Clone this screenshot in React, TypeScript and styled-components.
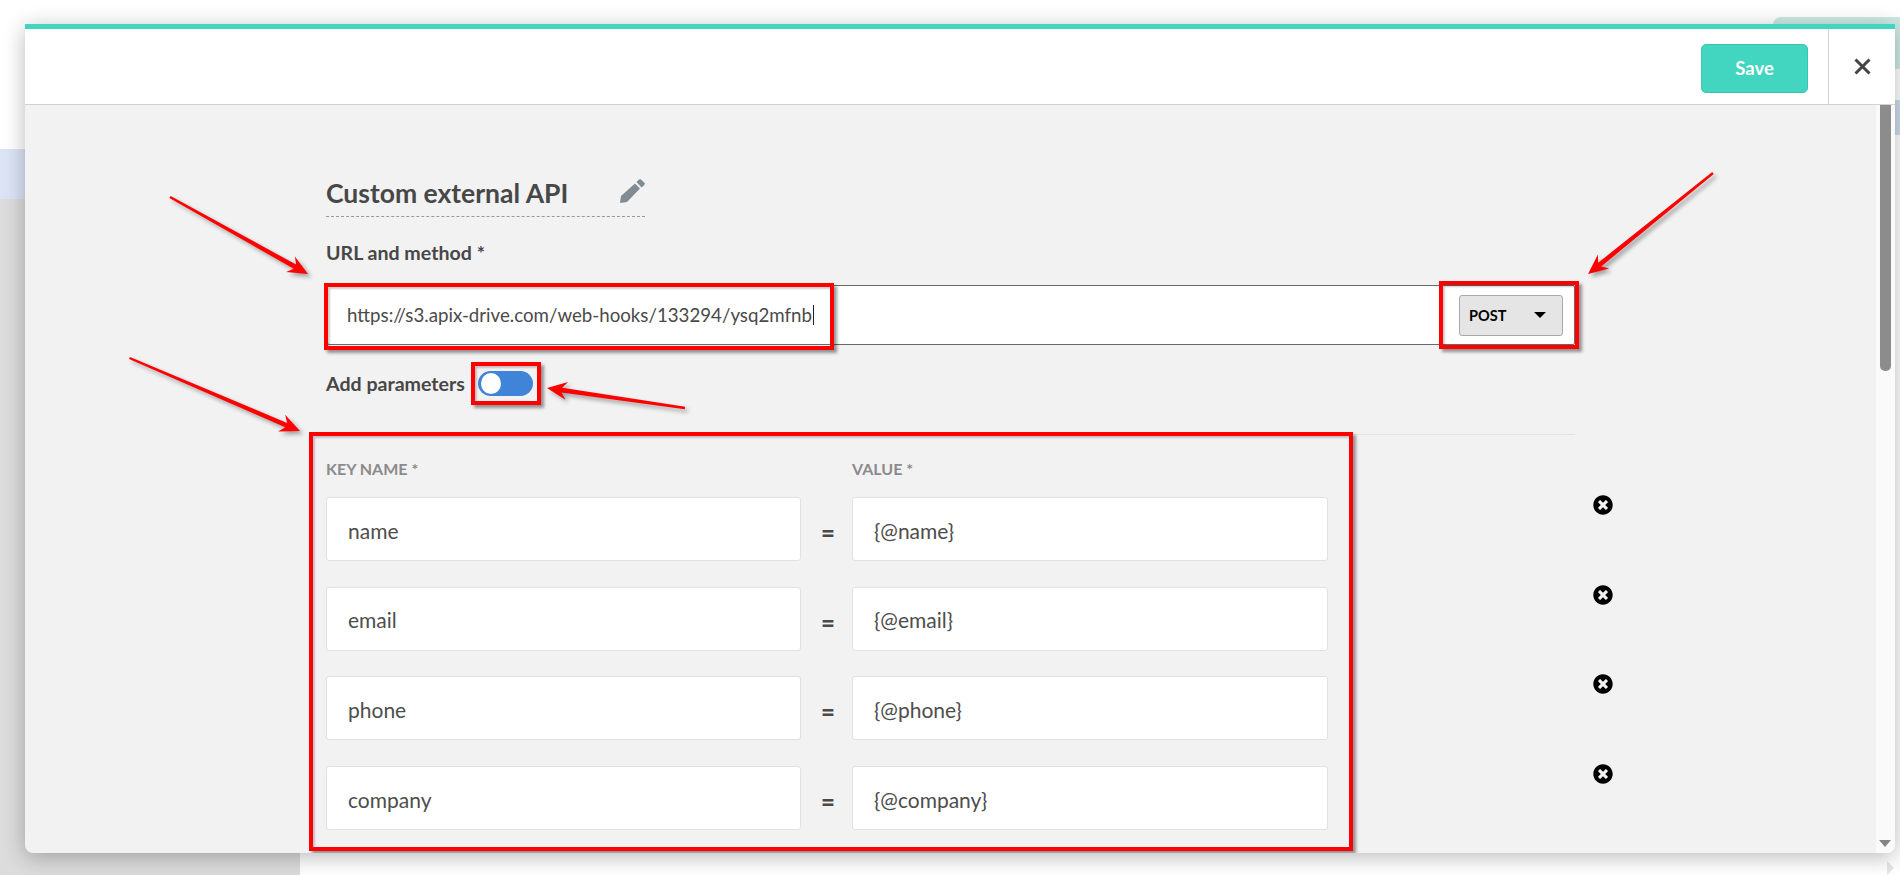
import React from "react";
import styled, { createGlobalStyle } from "styled-components";
import { FaTimesCircle } from "react-icons/fa";

const Global = createGlobalStyle`
  html, body { margin: 0; padding: 0; width: 1900px; height: 875px; overflow: hidden; background: #fff; }
  #root { width: 1900px; height: 875px; }
  * { box-sizing: border-box; }
  body { font-family: Lato, "Open Sans", sans-serif; color: #444; }
`;

const Page = styled.div`
  position: relative;
  width: 1900px;
  height: 875px;
  display: grid;
  grid-template-columns: 300px 1fr;
  overflow: hidden;
`;
const Sidebar = styled.aside`
  display: flex;
  flex-direction: column;
  background: #dcdcdc;
`;
const SidebarTop = styled.div`
  height: 149px;
  background: #fff;
`;
const SidebarActive = styled.div`
  height: 50px;
  background: #dce4f6;
`;
const Main = styled.main`
  display: flex;
  flex-direction: column;
  align-items: flex-end;
  background: #fff;
`;
const GhostButton = styled.div`
  width: 127px;
  height: 52px;
  margin-top: 17px;
  background: #cde9e4;
  border-radius: 8px 0 0 0;
`;
const GhostStrip = styled.div`
  width: 127px;
  height: 35px;
  margin-top: 31px;
  background: #cfdbec;
`;
const GhostArrow = styled.div`
  margin-top: auto;
  margin-right: 6px;
  width: 0;
  height: 0;
  border-left: 7px solid #e6e6e6;
  border-top: 7px solid transparent;
  border-bottom: 7px solid transparent;
`;

const Modal = styled.section`
  position: absolute;
  left: 25px;
  top: 24px;
  width: 1870px;
  height: 829px;
  display: flex;
  flex-direction: column;
  background: #f2f2f2;
  border-top: 5px solid #42d6c0;
  border-radius: 0 0 8px 8px;
  box-shadow: 0 4px 22px rgba(0, 0, 0, 0.28);
  overflow: hidden;
`;
const Header = styled.header`
  flex: none;
  height: 76px;
  display: flex;
  justify-content: flex-end;
  background: #fff;
  border-bottom: 1px solid #d2d2d2;
`;
const HeaderAction = styled.div`
  display: flex;
  align-items: center;
  padding: 0 20px 0 0;
`;
const SaveButton = styled.button`
  width: 107px;
  height: 49px;
  margin-top: 3px;
  padding: 0;
  background: #42d6c0;
  border: 1px solid #3cc4b0;
  border-radius: 5px;
  color: #fff;
  font: 700 18.5px Lato, sans-serif;
`;
const CloseCell = styled.div`
  width: 67px;
  display: flex;
  align-items: center;
  justify-content: center;
  border-left: 1px solid #d2d2d2;
`;
const Body = styled.div`
  flex: 1;
  min-height: 0;
  display: flex;
`;
const Scroll = styled.div`
  flex: 1;
  min-width: 0;
  padding: 70px 0 0 301px;
  overflow: hidden;
`;
const Track = styled.div`
  position: relative;
  flex: none;
  width: 19px;
  background: #fafafa;
  padding-left: 4px;
`;
const Thumb = styled.div`
  width: 11px;
  height: 266px;
  background: #8c8c8c;
  border-radius: 0 0 5px 5px;
`;
const TrackArrow = styled.div`
  position: absolute;
  left: 3px;
  bottom: 6px;
  width: 0;
  height: 0;
  border-top: 7px solid #858585;
  border-left: 6.5px solid transparent;
  border-right: 6.5px solid transparent;
`;

const Form = styled.div`
  width: 1249px;
`;
const TitleRow = styled.div`
  width: 319px;
  height: 42px;
  display: flex;
  justify-content: space-between;
  align-items: flex-start;
  border-bottom: 1px dashed #9a9a9a;
`;
const Title = styled.h1`
  margin: 0;
  font: 700 26.5px/37px Lato, sans-serif;
  color: #474747;
`;
const Pencil = styled.svg`
  flex: none;
  margin-top: 4px;
  width: 25px;
  height: 24px;
  fill: #808b93;
`;
const Label = styled.div`
  margin-top: 25px;
  font: 700 19.6px/22px Lato, sans-serif;
  color: #474747;
`;
const UrlBox = styled.div`
  position: relative;
  height: 60px;
  margin-top: 21px;
  margin-left: 1px;
  display: flex;
  align-items: center;
  justify-content: space-between;
  padding: 0 11px 0 19px;
  background: #fff;
  border: 1px solid #6a6a6a;
  border-radius: 2px;
`;
const UrlText = styled.div`
  display: flex;
  align-items: center;
  font: 400 18.7px/24px Lato, sans-serif;
  color: #4a4a4a;
`;
const Caret = styled.span`
  width: 1px;
  height: 20px;
  margin-left: 1px;
  background: #222;
`;
const MethodSelect = styled.div`
  width: 104px;
  height: 41px;
  display: flex;
  align-items: center;
  justify-content: space-between;
  padding: 0 16px 0 9px;
  background: #e5e5e5;
  border: 1px solid #a9a9a9;
  border-radius: 3px;
  color: #000;
  font: 700 14.5px Lato, sans-serif;
`;
const DownCaret = styled.span`
  width: 0;
  height: 0;
  border-top: 6px solid #000;
  border-left: 6.5px solid transparent;
  border-right: 6.5px solid transparent;
`;
const ToggleRow = styled.div`
  display: flex;
  align-items: center;
  gap: 13px;
  height: 25px;
  margin-top: 26px;
`;
const ToggleLabel = styled.span`
  font: 700 19.6px/22px Lato, sans-serif;
  color: #474747;
`;
const Toggle = styled.div`
  position: relative;
  width: 55px;
  height: 25px;
  padding: 2px 3px;
  background: #3f84d8;
  border-radius: 13px;
`;
const Knob = styled.div`
  width: 20px;
  height: 21px;
  background: #fff;
  border-radius: 50%;
`;
const Divider = styled.hr`
  height: 1px;
  margin: 38px 0 0;
  border: 0;
  background: #e2e2e2;
`;
const Params = styled.div`
  position: relative;
  padding-top: 24px;
`;
const ColumnHead = styled.div`
  display: flex;
  height: 20px;
  font: 700 16px/20px Lato, sans-serif;
  color: #8b8b8b;
`;
const KeyHead = styled.span`
  width: 526px;
`;
const Rows = styled.div`
  display: flex;
  flex-direction: column;
  gap: 25.7px;
  margin-top: 18px;
`;
const Row = styled.div`
  display: flex;
  height: 64px;
`;
const Field = styled.div<{ $w: number }>`
  flex: none;
  width: ${(p) => p.$w}px;
  height: 100%;
  display: flex;
  align-items: center;
  padding: 3px 0 0 21px;
  background: #fff;
  border: 1px solid #e1e1e1;
  border-radius: 3px;
  font: 400 21px/24px Lato, sans-serif;
  color: #4d4d4d;
`;
const Equals = styled.span`
  flex: none;
  width: 51px;
  display: flex;
  align-items: center;
  justify-content: center;
  padding: 8px 0 0 3px;
  font: 900 24px/24px Lato, sans-serif;
  color: #4a4a4a;
`;
const Remove = styled.span`
  flex: none;
  display: flex;
  margin: -2px 0 0 264.5px;
  height: 20px;
  color: #000;
`;
const Highlight = styled.div<{ $t: number; $r?: number; $b: number; $l?: number; $w?: number }>`
  position: absolute;
  top: ${(p) => p.$t}px;
  bottom: ${(p) => p.$b}px;
  ${(p) => (p.$l !== undefined ? `left: ${p.$l}px;` : "")}
  ${(p) => (p.$r !== undefined ? `right: ${p.$r}px;` : "")}
  ${(p) => (p.$w !== undefined ? `width: ${p.$w}px;` : "")}
  border: 4px solid #fe0000;
  box-shadow: 3px 3px 3px rgba(0, 0, 0, 0.4), inset 2px 2px 2px rgba(0, 0, 0, 0.2);
  pointer-events: none;
`;
const Annotations = styled.svg`
  position: absolute;
  left: 0;
  top: 0;
  width: 1900px;
  height: 875px;
  pointer-events: none;
  overflow: visible;
  filter: drop-shadow(3px 3px 2px rgba(0, 0, 0, 0.35));
`;

const arrowPoints = (x1: number, y1: number, x2: number, y2: number) => {
  const len = Math.hypot(x2 - x1, y2 - y1);
  const ux = (x2 - x1) / len;
  const uy = (y2 - y1) / len;
  const nx = -uy;
  const ny = ux;
  const at = (d: number, w: number) => `${x1 + ux * d + nx * w},${y1 + uy * d + ny * w}`;
  return [
    at(0, 1.2),
    at(len - 15, 2.4),
    at(len - 20, 9),
    at(len, 0),
    at(len - 20, -9),
    at(len - 15, -2.4),
    at(0, -1.2),
  ].join(" ");
};

const arrows = [
  [170, 197, 308, 274],
  [1713, 173, 1588, 274],
  [129.5, 358, 300, 431],
  [685, 408, 547, 388],
];
const params = ["name", "email", "phone", "company"];

export default function App() {
  return (
    <Page>
      <Global />
      <Sidebar>
        <SidebarTop />
        <SidebarActive />
      </Sidebar>
      <Main>
        <GhostButton />
        <GhostStrip />
        <GhostArrow />
      </Main>
      <Modal>
        <Header>
          <HeaderAction>
            <SaveButton>Save</SaveButton>
          </HeaderAction>
          <CloseCell>
            <svg width="17" height="17" viewBox="0 0 17 17">
              <path d="M1.5 1.5 L15.5 15.5 M15.5 1.5 L1.5 15.5" stroke="#444" strokeWidth="3" fill="none" />
            </svg>
          </CloseCell>
        </Header>
        <Body>
          <Scroll>
            <Form>
              <TitleRow>
                <Title>Custom external API</Title>
                <Pencil viewBox="0 0 25 24">
                  <path d="M0 24 L1 17 L15 4.5 L20 9.5 L7 23 Z" />
                  <path d="M16.5 3 L19 0.6 Q20 0 21 0.6 L24.6 4 Q25 5 24.4 6 L21.5 8.5 Z" />
                </Pencil>
              </TitleRow>
              <Label>URL and method *</Label>
              <UrlBox>
                <UrlText>
                  https://s3.apix-drive.com/web-hooks/133294/ysq2mfnb
                  <Caret />
                </UrlText>
                <MethodSelect>
                  POST
                  <DownCaret />
                </MethodSelect>
                <Highlight $t={-3} $b={-6} $l={-4} $w={510} />
                <Highlight $t={-5} $b={-5} $r={-5} $w={140} />
              </UrlBox>
              <ToggleRow>
                <ToggleLabel>Add parameters</ToggleLabel>
                <Toggle>
                  <Knob />
                  <Highlight $t={-9} $b={-9} $l={-7} $r={-8} />
                </Toggle>
              </ToggleRow>
              <Divider />
              <Params>
                <ColumnHead>
                  <KeyHead>KEY NAME *</KeyHead>
                  <span>VALUE *</span>
                </ColumnHead>
                <Rows>
                  {params.map((p) => (
                    <Row key={p}>
                      <Field $w={475}>{p}</Field>
                      <Equals>=</Equals>
                      <Field $w={476}>{`{@${p}}`}</Field>
                      <Remove>
                        <FaTimesCircle size={20} />
                      </Remove>
                    </Row>
                  ))}
                </Rows>
                <Highlight $t={-3} $b={-21} $l={-17} $r={222} />
              </Params>
            </Form>
          </Scroll>
          <Track>
            <Thumb />
            <TrackArrow />
          </Track>
        </Body>
      </Modal>
      <Annotations viewBox="0 0 1900 875">
        {arrows.map(([a, b, c, d]) => (
          <polygon key={`${a}-${b}`} points={arrowPoints(a, b, c, d)} fill="#fe0000" />
        ))}
      </Annotations>
    </Page>
  );
}
